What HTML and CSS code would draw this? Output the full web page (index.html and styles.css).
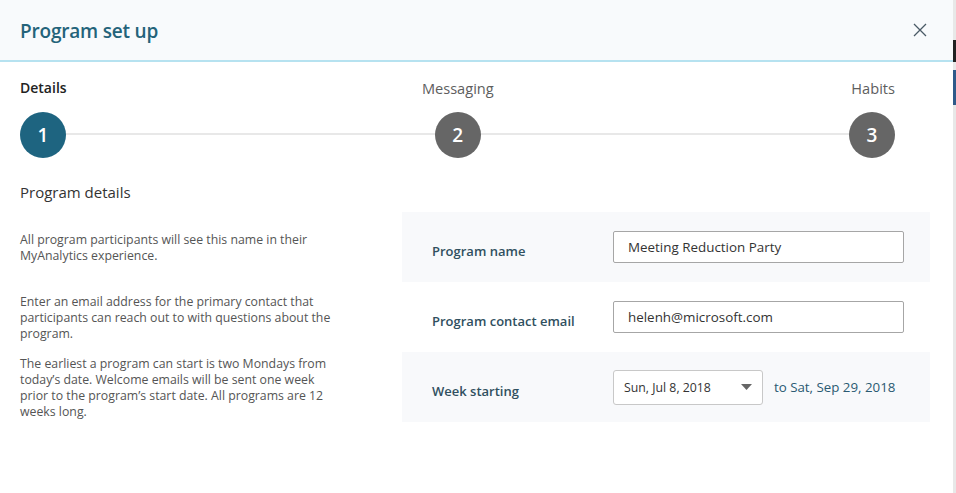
FILE: index.html
```html
<!DOCTYPE html>
<html>
<head>
<meta charset="utf-8">
<link rel="stylesheet" href="styles.css">
</head>
<body>
<div class="dialog">
  <header class="header">
    <h1 class="title">Program set up</h1>
    <button class="close" aria-label="Close">
      <svg width="14" height="14" viewBox="0 0 14 14"><path d="M1 1L13 13M13 1L1 13" stroke="#4a5a66" stroke-width="1.3" fill="none"/></svg>
    </button>
  </header>
  <div class="body">
    <div class="steps">
      <div class="step first">
        <div class="step-label active">Details</div>
        <div class="circle active">1</div>
      </div>
      <div class="step mid">
        <div class="step-label">Messaging</div>
        <div class="circle">2</div>
      </div>
      <div class="step last">
        <div class="step-label">Habits</div>
        <div class="circle">3</div>
      </div>
    </div>
    <h2 class="section">Program details</h2>
    <div class="content">
      <div class="help">
        <p class="h1">All program participants will see this name in their MyAnalytics experience.</p>
        <p class="h2">Enter an email address for the primary contact that participants can reach out to with questions about the program.</p>
        <p class="h3">The earliest a program can start is two Mondays from today’s date. Welcome emails will be sent one week prior to the program’s start date. All programs are 12 weeks long.</p>
      </div>
      <div class="form">
        <div class="row shaded">
          <label class="label">Program name</label>
          <div class="input">Meeting Reduction Party</div>
        </div>
        <div class="row">
          <label class="label">Program contact email</label>
          <div class="input">helenh@microsoft.com</div>
        </div>
        <div class="row shaded">
          <label class="label">Week starting</label>
          <div class="select">
            <span>Sun, Jul 8, 2018</span>
            <svg width="11" height="6" viewBox="0 0 11 6"><path d="M0 0H11L5.5 6Z" fill="#666"/></svg>
          </div>
          <span class="to">to Sat, Sep 29, 2018</span>
        </div>
      </div>
    </div>
  </div>
  <div class="scrollbar"><div class="thumb"></div></div>
</div>
</body>
</html>
```
FILE: styles.css
```css
* { box-sizing: border-box; }
html, body { margin: 0; padding: 0; }
body {
  width: 956px;
  height: 493px;
  overflow: hidden;
  background: #fff;
  font-family: "Open Sans", "Noto Sans", sans-serif;
}
.dialog {
  position: relative;
  width: 956px;
  height: 493px;
}
.header {
  height: 62px;
  background: #f8fafc;
  border-bottom: 2px solid #b6e2f0;
  width: 953px;
  display: flex;
  align-items: center;
  justify-content: space-between;
  padding: 0 26px 0 20px;
}
.title {
  margin: 0;
  font-size: 19px;
  font-weight: 600;
  color: #24637a;
  letter-spacing: -0.2px;
  padding-top: 2px;
}
.close {
  border: 0;
  background: none;
  padding: 0;
  width: 14px;
  height: 14px;
  display: flex;
}
.body {
  padding: 0 0 0 20px;
  width: 935px;
}
.steps {
  display: flex;
  justify-content: space-between;
  width: 875px;
  margin-top: 16px;
  position: relative;
}
.steps::before {
  content: "";
  position: absolute;
  left: 23px;
  right: 23px;
  top: 55px;
  height: 2px;
  background: #e8e8e8;
}
.step {
  display: flex;
  flex-direction: column;
  position: relative;
}
.step.first { align-items: flex-start; }
.step.mid { align-items: center; }
.step.last { align-items: flex-end; }
.step-label {
  font-size: 14.6px;
  color: #5e5e5e;
  height: 20px;
  line-height: 20px;
  font-weight: 400;
}
.step-label.active { color: #222; font-weight: 600; font-size: 14px; }
.circle {
  margin-top: 14px;
  width: 46px;
  height: 46px;
  border-radius: 50%;
  background: #666;
  color: #fff;
  font-size: 19px;
  font-weight: 600;
  display: flex;
  align-items: center;
  justify-content: center;
}
.circle.active { background: #1e6480; }
.section {
  margin: 24px 0 0;
  font-size: 15px;
  font-weight: 400;
  color: #333;
  line-height: 20px;
}
.content {
  display: flex;
  margin-top: 10px;
}
.help {
  width: 382px;
  padding-top: 20px;
  font-size: 12.3px;
  line-height: 16px;
  color: #555;
}
.help p { margin: 0; width: 316px; }
.help .h2 { margin-top: 30px; }
.help .h3 { margin-top: 14px; }
.form {
  width: 528px;
}
.row {
  height: 70px;
  display: flex;
  align-items: center;
  padding-left: 30px;
}
.row.shaded { background: #f8f9fb; }
.label {
  width: 181px;
  font-size: 13px;
  font-weight: 600;
  color: #30505f;
  padding-top: 8px;
}
.input {
  width: 291px;
  height: 32px;
  border: 1px solid #a6a6a6;
  border-radius: 2px;
  background: #fff;
  padding: 0 14px;
  display: flex;
  align-items: center;
  font-size: 13.4px;
  color: #333;
}
.select {
  width: 150px;
  height: 35px;
  border: 1px solid #c8c8c8;
  border-radius: 3px;
  background: #fff;
  display: flex;
  align-items: center;
  justify-content: space-between;
  padding: 0 10px 0 10px;
  font-size: 12.3px;
  color: #333;
}
.to {
  margin-left: 11px;
  font-size: 13.3px;
  color: #2a5a72;
}
.scrollbar {
  position: absolute;
  right: 0;
  top: 0;
  width: 3px;
  height: 493px;
  background: #e8e8e8;
}
.scrollbar::before {
  content: "";
  position: absolute;
  top: 40px;
  left: 0;
  width: 3px;
  height: 22px;
  background: #222;
}
.thumb {
  position: absolute;
  top: 70px;
  left: 0;
  width: 3px;
  height: 35px;
  background: #2e5a8a;
}
```
